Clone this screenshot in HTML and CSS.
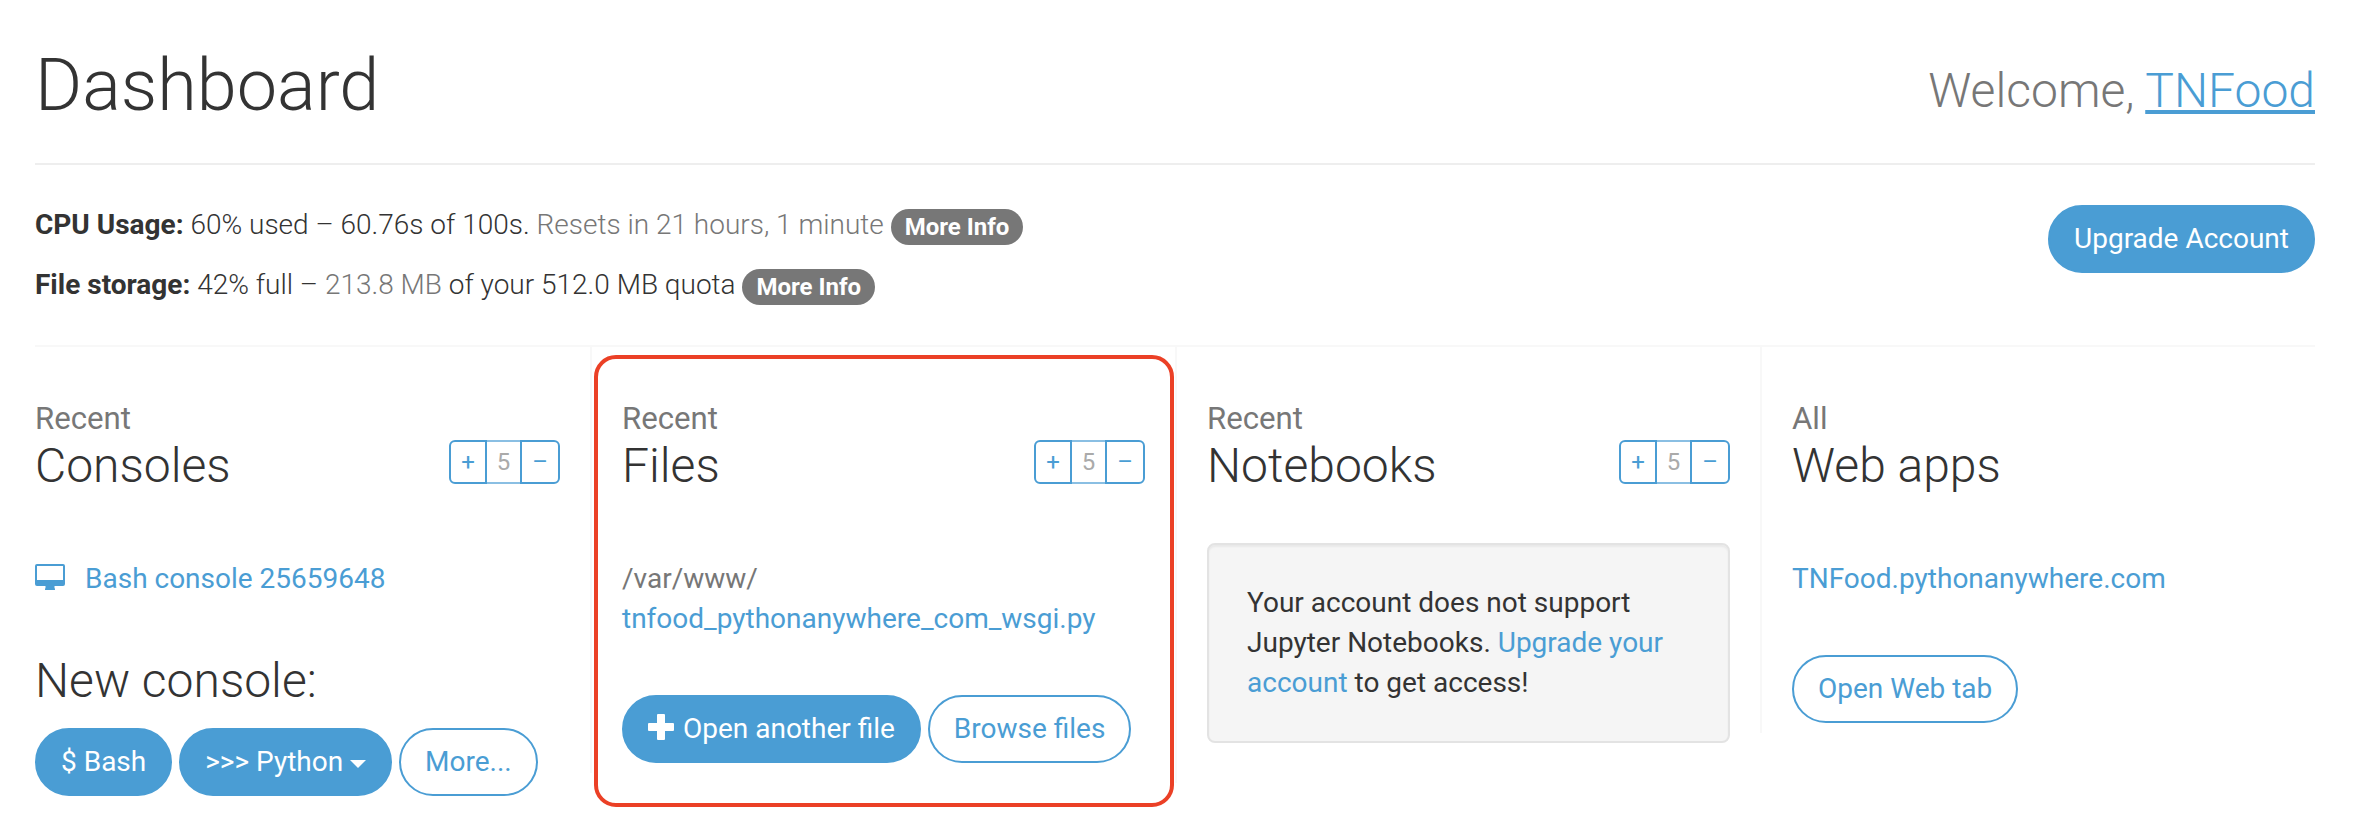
FILE: index.html
```html
<!DOCTYPE html>
<html lang="en">
<head>
<meta charset="utf-8">
<title>Dashboard</title>
<link rel="stylesheet" href="styles.css">
</head>
<body>
<main class="container">
  <header class="page-head">
    <h1 class="page-title">Dashboard</h1>
    <div class="welcome">Welcome, <a class="user" href="#">TNFood</a></div>
  </header>
  <section class="usage">
    <div class="usage-text">
      <p class="usage-line"><b>CPU Usage:</b> 60% used – 60.76s of 100s. <span class="muted">Resets in 21 hours, 1 minute</span> <span class="badge">More Info</span></p>
      <p class="usage-line"><b>File storage:</b> 42% full – <span class="muted">213.8 MB</span> of your 512.0 MB quota <span class="badge">More Info</span></p>
    </div>
    <a class="btn btn-primary" href="#">Upgrade Account</a>
  </section>
  <div class="columns">
    <section class="col col-consoles">
      <div class="col-head">
        <h2 class="col-title"><small class="kicker">Recent</small>Consoles</h2>
        <div class="stepper"><span class="step step-plus">+</span><span class="step-value">5</span><span class="step step-minus">–</span></div>
      </div>
      <div class="console-row">
        <svg class="monitor" viewBox="0 0 30 26"><path fill-rule="evenodd" d="M2 0H28Q30 0 30 2V20Q30 22 28 22H19.500V24Q20 24 20 26H10Q10 24 10.500 24V22H2Q0 22 0 20V2Q0 0 2 0ZM2 2V16H28V2Z"/></svg>
        <a class="link" href="#">Bash console 25659648</a>
      </div>
      <h2 class="new-console">New console:</h2>
      <div class="buttons"><a class="btn btn-primary" href="#">$ Bash</a> <a class="btn btn-primary" href="#">&gt;&gt;&gt; Python <span class="caret"></span></a> <a class="btn" href="#">More...</a></div>
    </section>
    <section class="col col-files">
      <div class="highlight"></div>
      <div class="col-head">
        <h2 class="col-title"><small class="kicker">Recent</small>Files</h2>
        <div class="stepper"><span class="step step-plus">+</span><span class="step-value">5</span><span class="step step-minus">–</span></div>
      </div>
      <div class="file-path"><span class="muted">/var/www/</span><br><a class="link" href="#">tnfood_pythonanywhere_com_wsgi.py</a></div>
      <div class="buttons"><a class="btn btn-primary" href="#"><svg class="plus" viewBox="0 0 26 26"><path d="M10 0H16Q17 0 17 1V9H25Q26 9 26 10V16Q26 17 25 17H17V25Q17 26 16 26H10Q9 26 9 25V17H1Q0 17 0 16V10Q0 9 1 9H9V1Q9 0 10 0Z"/></svg> Open another file</a> <a class="btn" href="#">Browse files</a></div>
    </section>
    <section class="col col-notebooks">
      <div class="col-head">
        <h2 class="col-title"><small class="kicker">Recent</small>Notebooks</h2>
        <div class="stepper"><span class="step step-plus">+</span><span class="step-value">5</span><span class="step step-minus">–</span></div>
      </div>
      <div class="well">Your account does not support Jupyter Notebooks. <a class="link" href="#">Upgrade your account</a> to get access!</div>
    </section>
    <section class="col col-web">
      <div class="col-head">
        <h2 class="col-title"><small class="kicker">All</small>Web apps</h2>
      </div>
      <div class="web-app"><a class="link" href="#">TNFood.pythonanywhere.com</a></div>
      <div class="buttons"><a class="btn" href="#">Open Web tab</a></div>
    </section>
  </div>
</main>
</body>
</html>
```
FILE: styles.css
```css
* { box-sizing: border-box; }
body {
  margin: 0;
  min-height: 818px;
  background: #fff;
  color: #333;
  font: 400 28px/40px Roboto, sans-serif;
}
h1, h2, p { margin: 0; font-weight: 300; }
.container { width: 2280px; min-height: 818px; margin-left: 35px; }
.page-head {
  display: flex;
  justify-content: space-between;
  align-items: flex-start;
  height: 165px;
  padding-top: 46px;
  border-bottom: 2px solid #eee;
}
.page-title { font-size: 72px; line-height: 79px; }
.welcome { padding-top: 18px; font-size: 48px; line-height: 53px; font-weight: 300; color: #777; }
.user { color: #4a9dd4; text-decoration: underline; text-decoration-thickness: 4px; text-underline-offset: 3px; text-decoration-skip-ink: none; }
.usage {
  display: flex;
  justify-content: space-between;
  align-items: flex-start;
  height: 182px;
  padding-top: 40px;
  border-bottom: 2px solid #f8f8f8;
}
.usage-line { margin-bottom: 20px; font-weight: 300; white-space: nowrap; }
.usage-line b { font-weight: 700; }
.muted { color: #777; }
.badge {
  display: inline-block;
  padding: 6px 14px;
  border-radius: 20px;
  background: #777;
  color: #fff;
  font-size: 24px;
  font-weight: 700;
  line-height: 24px;
  vertical-align: middle;
}
.columns { display: grid; grid-template-columns: repeat(4, 585px); align-items: start; margin: 0 -30px; }
.col { position: relative; padding: 0 30px; border-left: 2px solid #f8f8f8; }
.col-consoles { border-left: 0; }
.col-files { height: 426px; }
.col-notebooks { height: 436px; }
.col-web { height: 386px; }
.col-head {
  display: flex;
  justify-content: space-between;
  align-items: flex-start;
  height: 196px;
  padding-top: 49px;
}
.col-title { font-size: 48px; line-height: 48px; }
.kicker { display: block; font-size: 31.2px; font-weight: 400; line-height: 46px; color: #777; }
.stepper { display: flex; width: 111px; height: 44px; margin-top: 44px; font-size: 24px; line-height: 40px; text-align: center; }
.step { width: 38px; border: 2px solid #4a9dd4; color: #4a9dd4; }
.step-plus { border-radius: 6px 0 0 6px; }
.step-minus { flex: 1; border-radius: 0 6px 6px 0; }
.step-value { width: 33px; border: solid #8abfe3; border-width: 2px 0; color: #aaa; }
.link { color: #4a9dd4; text-decoration: none; }
.console-row { display: flex; align-items: center; gap: 20px; height: 72px; }
.monitor { width: 30px; height: 26px; margin-bottom: 4px; fill: #4a9dd4; }
.new-console { height: 113px; padding-top: 39px; font-size: 48px; line-height: 53px; }
.buttons { white-space: nowrap; }
.btn {
  display: inline-block;
  height: 68px;
  padding: 12px 24px;
  border: 2px solid #4a9dd4;
  border-radius: 34px;
  color: #4a9dd4;
  text-decoration: none;
}
.btn-primary { background: #4a9dd4; color: #fff; }
.caret {
  display: inline-block;
  border: 8px solid transparent;
  border-top-color: #fff;
  border-bottom: 0;
  vertical-align: middle;
}
.plus { width: 26px; height: 26px; margin-right: 2px; fill: #fff; vertical-align: -2px; }
.file-path { padding: 16px 0 56px; }
.well {
  height: 200px;
  padding: 38px;
  border: 2px solid #e3e3e3;
  border-radius: 8px;
  background: #f5f5f5;
  box-shadow: inset 0 2px 2px rgba(0, 0, 0, 0.05);
}
.web-app { padding: 16px 0 56px; }
.highlight {
  position: absolute;
  inset: 8px auto auto 2px;
  width: 580px;
  height: 452px;
  border: 4px solid #eb4026;
  border-radius: 22px;
}
```
